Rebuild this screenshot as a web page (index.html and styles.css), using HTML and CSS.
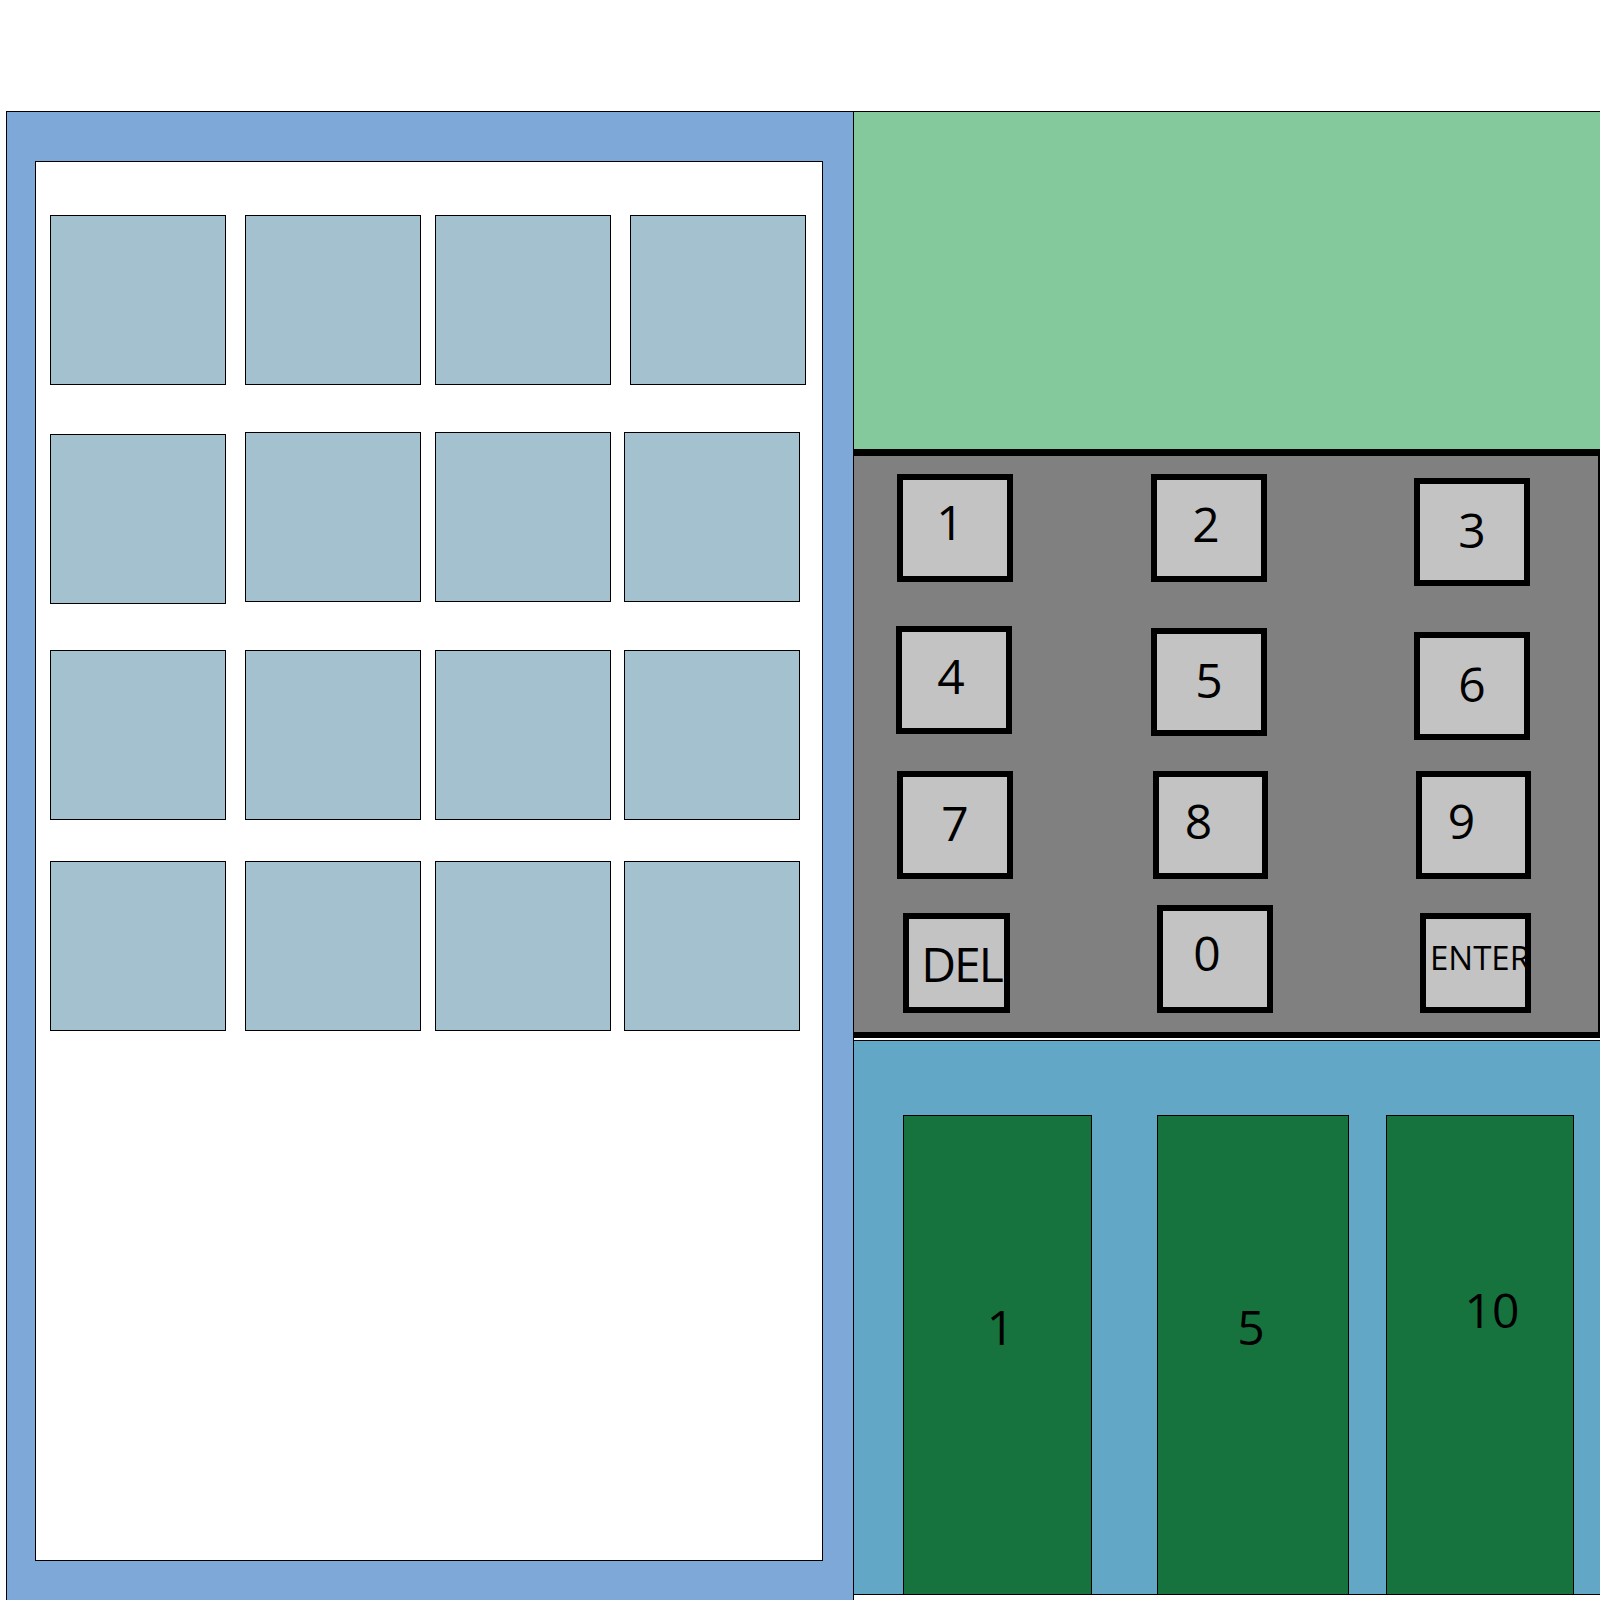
FILE: index.html
```html
<!DOCTYPE html>
<html lang="en">
<head>
    <meta charset="UTF-8">
    <meta name="viewport" content="width=device-width, initial-scale=1.0">
    <title>Cashier</title>
    <link rel="stylesheet" href="styles.css">
</head>
<body>
    <div class="layout">
        <div class="order-panel">
            <div class="order-sheet">
                <div class="tile-grid">
                    <div class="tile"></div>
                    <div class="tile"></div>
                    <div class="tile"></div>
                    <div class="tile tile-shift"></div>
                    <div class="tile tile-low"></div>
                    <div class="tile"></div>
                    <div class="tile"></div>
                    <div class="tile"></div>
                    <div class="tile"></div>
                    <div class="tile"></div>
                    <div class="tile"></div>
                    <div class="tile"></div>
                    <div class="tile"></div>
                    <div class="tile"></div>
                    <div class="tile"></div>
                    <div class="tile"></div>
                </div>
            </div>
        </div>

        <div class="side-panel">
            <div class="display"></div>

            <div class="keypad">
                <button class="key key-one">1</button>
                <button class="key key-two">2</button>
                <button class="key key-low">3</button>
                <button class="key key-up">4</button>
                <button class="key">5</button>
                <button class="key key-low">6</button>
                <button class="key">7</button>
                <button class="key key-left">8</button>
                <button class="key key-left">9</button>
                <button class="key key-del">DEL</button>
                <button class="key key-zero">0</button>
                <button class="key key-enter">ENTER</button>
            </div>

            <div class="cash">
                <button class="bill">1</button>
                <button class="bill bill-wide">5</button>
                <button class="bill bill-ten">10</button>
            </div>
        </div>
    </div>
</body>
</html>
```

FILE: styles.css
```css
body {
    margin: 0;
    padding: 111px 0 0 6px;
    font-family: "Open Sans", Arial, sans-serif;
    background-color: #FFFFFF;
    overflow: hidden;
}

.layout {
    display: flex;
    align-items: flex-start;
}

/* left side: order tiles */
.order-panel {
    box-sizing: border-box;
    width: 848px;
    height: 1494px;
    padding: 49px 0 0 28px;
    background-color: #7DA8D8;
    border: 1px solid #000;
}

.order-sheet {
    box-sizing: border-box;
    width: 788px;
    height: 1400px;
    padding: 53px 0 0 14px;
    background-color: #FFFFFF;
    border: 1px solid #000;
}

.tile-grid {
    display: grid;
    grid-template-columns: 195px 190px 189px 176px;
    grid-template-rows: 217px 218px 211px 170px;
}

.tile {
    box-sizing: border-box;
    width: 176px;
    height: 170px;
    background-color: #A3C1CE;
    border: 1px solid #000;
}

.tile-shift {
    margin-left: 6px;
}

.tile-low {
    margin-top: 2px;
}

/* right side */
.side-panel {
    box-sizing: border-box;
    width: 746px;
    display: flex;
    flex-direction: column;
    border-top: 1px solid #000;
}

.display {
    height: 337px;
    background-color: #84C99C;
}

.keypad {
    box-sizing: border-box;
    height: 589px;
    display: grid;
    grid-template-columns: 254px 263px auto;
    grid-template-rows: 154px 143px 134px auto;
    align-items: start;
    padding: 18px 0 0 43px;
    background-color: #808080;
    border-top: 7px solid #000;
    border-bottom: 6px solid #000;
    border-right: 2px solid #000;
    margin-bottom: 2px;
}

.key {
    box-sizing: border-box;
    width: 116px;
    height: 108px;
    padding: 0 0 6px 0;
    display: flex;
    align-items: center;
    justify-content: center;
    background-color: #C3C3C3;
    border: 6px solid #000;
    font-family: "Open Sans", Arial, sans-serif;
    font-size: 48px;
    color: #000;
    white-space: nowrap;
    overflow: visible;
}

.key-one {
    padding: 0 10px 14px 0;
}

.key-two {
    padding: 0 6px 10px 0;
}

.key-low {
    margin-top: 4px;
}

.key-up {
    margin: -2px 0 0 -1px;
    padding: 0 6px 10px 0;
}

.key-left {
    width: 115px;
    margin-left: 2px;
    padding: 0 24px 10px 0;
}

.key-del {
    width: 107px;
    height: 100px;
    margin: 8px 0 0 6px;
    padding: 0 0 0 10px;
    letter-spacing: -2px;
}

.key-zero {
    margin-left: 6px;
    padding: 0 16px 14px 0;
}

.key-enter {
    width: 111px;
    height: 100px;
    margin: 8px 0 0 6px;
    padding: 0 0 12px 4px;
    justify-content: flex-start;
    font-size: 33px;
}

/* bills */
.cash {
    height: 555px;
    display: grid;
    grid-template-columns: 254px 229px 188px;
    padding: 74px 0 0 49px;
    box-sizing: border-box;
    background-color: #62A8C6;
    border-top: 1px solid #000;
    border-bottom: 1px solid #000;
}

.bill {
    box-sizing: border-box;
    width: 189px;
    height: 100%;
    padding: 0 0 58px 6px;
    display: flex;
    align-items: center;
    justify-content: center;
    background-color: #17733D;
    border: 1px solid #000;
    border-bottom: none;
    font-family: "Open Sans", Arial, sans-serif;
    font-size: 48px;
    color: #000;
}

.bill-wide {
    width: 192px;
    padding: 0 4px 58px 0;
}

.bill-ten {
    width: 188px;
    padding: 0 0 92px 24px;
}
```
